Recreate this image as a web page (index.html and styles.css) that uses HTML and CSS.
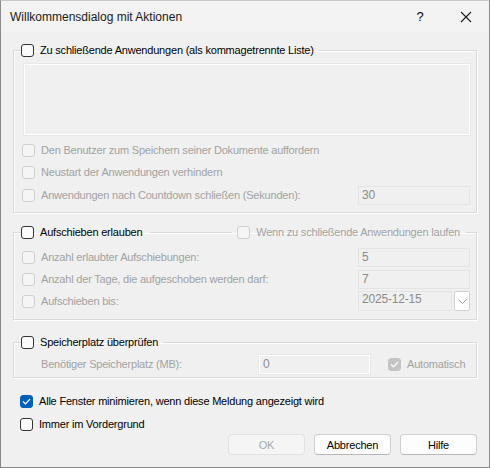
FILE: index.html
```html
<!DOCTYPE html>
<html lang="de">
<head>
    <meta charset="UTF-8">
    <title>Willkommensdialog mit Aktionen</title>
    <link rel="stylesheet" href="styles.css">
</head>
<body>
<div class="window">
    <div class="titlebar">
        <span class="title">Willkommensdialog mit Aktionen</span>
        <span class="help">?</span>
        <span class="close">
            <svg width="12" height="12" viewBox="0 0 12 12"><path d="M1 1 L11 11 M11 1 L1 11" stroke="#1a1a1a" stroke-width="1.1" fill="none"/></svg>
        </span>
    </div>

    <div class="content">
        <fieldset class="group group-apps">
            <legend><span class="box"></span>Zu schließende Anwendungen (als kommagetrennte Liste)</legend>
            <div class="textarea"></div>
            <div class="row off"><span class="box"></span>Den Benutzer zum Speichern seiner Dokumente auffordern</div>
            <div class="row off"><span class="box"></span>Neustart der Anwendungen verhindern</div>
            <div class="row off split countdown">
                <span><span class="box"></span>Anwendungen nach Countdown schließen (Sekunden):</span>
                <span class="field">30</span>
            </div>
        </fieldset>

        <fieldset class="group group-defer">
            <legend>
                <span class="legend-main"><span class="box"></span>Aufschieben erlauben</span>
                <span class="rule"></span>
                <span class="legend-side off"><span class="box"></span>Wenn zu schließende Anwendungen laufen</span>
            </legend>
            <div class="row off split">
                <span><span class="box"></span>Anzahl erlaubter Aufschiebungen:</span>
                <span class="field">5</span>
            </div>
            <div class="row off split">
                <span><span class="box"></span>Anzahl der Tage, die aufgeschoben werden darf:</span>
                <span class="field">7</span>
            </div>
            <div class="row off split">
                <span><span class="box"></span>Aufschieben bis:</span>
                <span class="date">
                    <span class="field date-field">2025-12-15</span>
                    <span class="drop">
                        <svg width="9" height="5" viewBox="0 0 9 5"><path d="M0.5 0.5 L4.5 4.5 L8.5 0.5" stroke="#9a9a9a" fill="none"/></svg>
                    </span>
                </span>
            </div>
        </fieldset>

        <fieldset class="group group-disk">
            <legend><span class="box"></span>Speicherplatz überprüfen</legend>
            <div class="row off disk-row">
                <span class="indent">Benötiger Speicherplatz (MB):</span>
                <span class="field disk-field">0</span>
                <span class="auto"><span class="box checked-off">
                    <svg width="9" height="7" viewBox="0 0 9 7"><path d="M1 3.5 L3.5 6 L8 1" stroke="#fff" stroke-width="1.2" fill="none"/></svg>
                </span>Automatisch</span>
            </div>
        </fieldset>

        <div class="options">
            <div class="option"><span class="box checked">
                <svg width="9" height="7" viewBox="0 0 9 7"><path d="M1 3.5 L3.5 6 L8 1" stroke="#fff" stroke-width="1.2" fill="none"/></svg>
            </span>Alle Fenster minimieren, wenn diese Meldung angezeigt wird</div>
            <div class="option"><span class="box"></span>Immer im Vordergrund</div>
        </div>

        <div class="buttons">
            <button disabled>OK</button>
            <button>Abbrechen</button>
            <button>Hilfe</button>
        </div>
    </div>
</div>
</body>
</html>
```

FILE: styles.css
```css
* {
    box-sizing: border-box;
}

body {
    margin: 0;
    font-family: "Liberation Sans", Arial, sans-serif;
    font-size: 11px;
    letter-spacing: -0.2px;
    color: #000;
    background: #f0f0f0;
}

.window {
    width: 490px;
    height: 468px;
    border: 1px solid #8a8a8a;
    border-top-color: #c8c8c8;
    background: #f0f0f0;
    overflow: hidden;
}

.titlebar {
    height: 31px;
    display: flex;
    align-items: center;
    padding-left: 9px;
    background: #f3f3f3;
    font-size: 12px;
    letter-spacing: 0;
}

.title {
    flex: 1;
    color: #1a1a1a;
}

.help {
    width: 46px;
    text-align: center;
    font-size: 13px;
}

.close {
    width: 46px;
    display: flex;
    justify-content: center;
}

.content {
    padding: 10px 12px 0 12px;
}

/* group boxes */
.group {
    margin: 0;
    padding: 0 6px 6px 8px;
    border: 1px solid #d9d9d9;
    box-shadow: inset 1px 1px 0 #fff, 1px 1px 0 #fff;
    min-width: 0;
}

.group legend {
    padding: 0 5px 0 0;
    margin-left: -1px;
    height: 16px;
    display: flex;
    align-items: center;
}

.group-defer {
    margin-top: 11px;
    padding-top: 6px;
    padding-bottom: 7px;
}

.group-defer legend {
    width: 445px;
    padding-right: 0;
}

.rule {
    flex: 1;
    height: 1px;
    margin: 0 5px 0 8px;
    background: #d9d9d9;
    box-shadow: 0 1px 0 #fff;
}

.legend-main,
.legend-side {
    display: flex;
    align-items: center;
}

.legend-side {
    padding-right: 6px;
}

.group-disk {
    margin-top: 14px;
    padding-top: 3px;
    padding-bottom: 2px;
}

.box {
    display: inline-flex;
    align-items: center;
    justify-content: center;
    width: 13px;
    height: 13px;
    margin-right: 6px;
    border: 1px solid #333;
    border-radius: 3px;
    background: #fbfbfb;
    flex: none;
}

.off {
    color: #a2a2a2;
}

.off .box {
    border-color: #cfcfcf;
    background: #f5f5f5;
}

.box.checked {
    background: #005fb8;
    border-color: #005fb8;
}

.off .box.checked-off {
    background: #c4c4c4;
    border-color: #c4c4c4;
}

.textarea {
    height: 71px;
    margin: 6px 0 4px 2px;
    border: 1px solid #fff;
    box-shadow: 0 0 0 1px #e8e8e8;
}

.row {
    height: 22px;
    display: flex;
    align-items: center;
}

.row > span {
    display: flex;
    align-items: center;
}

.countdown {
    margin-top: 1px;
}

.split {
    justify-content: space-between;
}

.field {
    width: 112px;
    height: 19px;
    padding-left: 3px;
    border: 1px solid #e4e4e4;
    background: #f0f0f0;
    color: #8c8c8c;
    font-size: 12px;
}

.date {
    display: flex;
    align-items: center;
    gap: 2px;
}

.date-field {
    width: 94px;
    height: 20px;
}

.drop {
    width: 16px;
    height: 20px;
    display: flex;
    align-items: center;
    justify-content: center;
    background: #fff;
    border: 1px solid #d0d0d0;
    border-radius: 2px;
}

.disk-row {
    padding-left: 19px;
}

.indent {
    width: 218px;
}

.disk-field {
    width: 111px;
    border-color: #fff;
    box-shadow: 0 0 0 1px #e8e8e8;
}

.auto {
    margin-left: 18px;
}

.options {
    margin-top: 12px;
    display: flex;
    flex-direction: column;
    gap: 1px;
}

.option {
    height: 22px;
    display: flex;
    align-items: center;
    padding-left: 7px;
}

.buttons {
    display: flex;
    justify-content: flex-end;
    gap: 9px;
    margin-top: -1px;
}

button {
    width: 77px;
    height: 21px;
    font-family: inherit;
    font-size: 11px;
    letter-spacing: -0.2px;
    color: #000;
    background: #fdfdfd;
    border: 1px solid #d0d0d0;
    border-bottom-color: #b8b8b8;
    border-radius: 4px;
}

button:disabled {
    color: #a8a8a8;
    background: #f5f5f5;
    border-color: #e2e2e2;
}
```
